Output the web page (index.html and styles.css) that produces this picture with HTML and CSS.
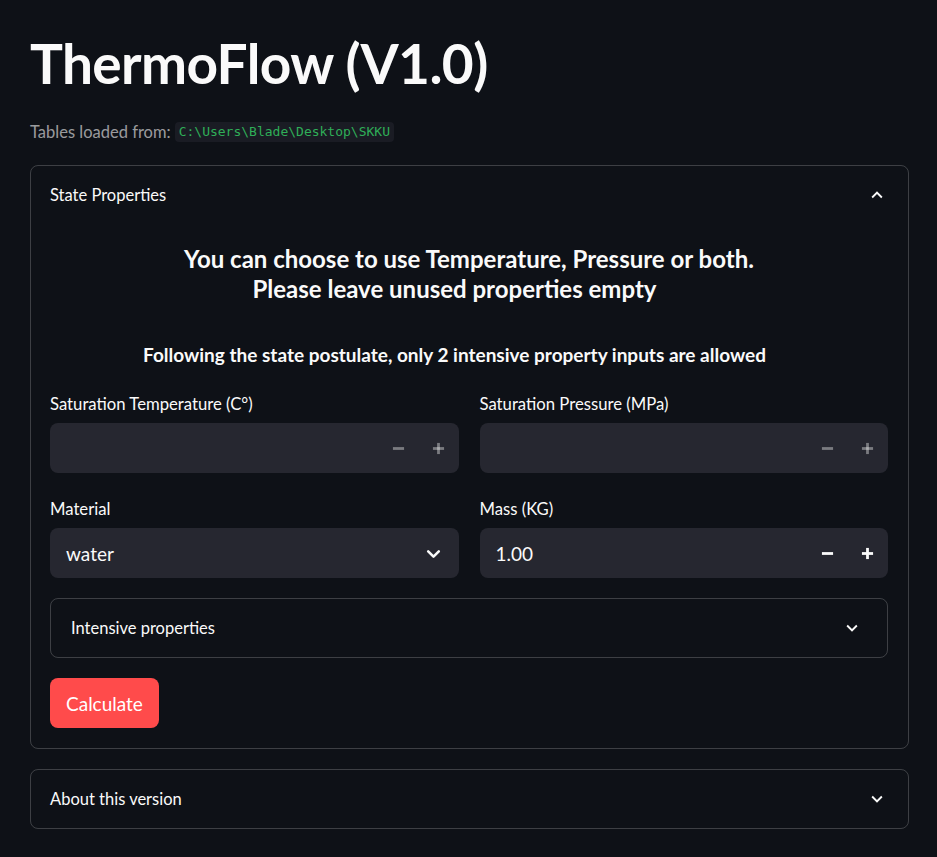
FILE: index.html
```html
<!DOCTYPE html>
<html lang="en">
<head>
<meta charset="utf-8">
<title>ThermoFlow</title>
<link rel="stylesheet" href="styles.css">
</head>
<body>
<main class="main">
  <h1 class="title">ThermoFlow (V1.0)</h1>
  <p class="caption">Tables loaded from: <code class="path">C:\Users\Blade\Desktop\SKKU</code></p>

  <section class="expander">
    <div class="exp-head">
      <span>State Properties</span>
      <svg class="chev" viewBox="0 0 24 24"><path d="M12 8l-6 6 1.41 1.41L12 10.83l4.59 4.58L18 14z" fill="currentColor"/></svg>
    </div>
    <div class="exp-body">
      <h3 class="intro">You can choose to use Temperature, Pressure or both.<br>Please leave unused properties empty<span class="trail"></span></h3>
      <h5 class="note">Following the state postulate, only 2 intensive property inputs are allowed<span class="trail"></span></h5>

      <div class="grid">
        <div class="field">
          <label class="label">Saturation Temperature (C°)</label>
          <div class="input">
            <span class="value"></span>
            <span class="steps dim">
              <svg viewBox="0 0 14 14"><rect x="1" y="5.5" width="12" height="3" fill="currentColor"/></svg>
              <svg viewBox="0 0 14 14"><rect x="1" y="5.5" width="12" height="3" fill="currentColor"/><rect x="5.5" y="1" width="3" height="12" fill="currentColor"/></svg>
            </span>
          </div>
        </div>
        <div class="field">
          <label class="label">Saturation Pressure (MPa)</label>
          <div class="input">
            <span class="value"></span>
            <span class="steps dim">
              <svg viewBox="0 0 14 14"><rect x="1" y="5.5" width="12" height="3" fill="currentColor"/></svg>
              <svg viewBox="0 0 14 14"><rect x="1" y="5.5" width="12" height="3" fill="currentColor"/><rect x="5.5" y="1" width="3" height="12" fill="currentColor"/></svg>
            </span>
          </div>
        </div>
        <div class="field">
          <label class="label">Material</label>
          <div class="input select">
            <span class="value">water</span>
            <svg class="sel-chev" viewBox="0 0 16 16"><path d="M3 6l5 5 5-5" fill="none" stroke="currentColor" stroke-width="2.4" stroke-linecap="round" stroke-linejoin="round"/></svg>
          </div>
        </div>
        <div class="field">
          <label class="label">Mass (KG)</label>
          <div class="input">
            <span class="value">1.00</span>
            <span class="steps">
              <svg viewBox="0 0 14 14"><rect x="1" y="5.5" width="12" height="3" fill="currentColor"/></svg>
              <svg viewBox="0 0 14 14"><rect x="1" y="5.5" width="12" height="3" fill="currentColor"/><rect x="5.5" y="1" width="3" height="12" fill="currentColor"/></svg>
            </span>
          </div>
        </div>
      </div>

      <div class="expander inner">
        <div class="exp-head">
          <span>Intensive properties</span>
          <svg class="chev" viewBox="0 0 24 24"><path d="M16.59 8.59L12 13.17 7.41 8.59 6 10l6 6 6-6z" fill="currentColor"/></svg>
        </div>
      </div>

      <button class="btn" type="button">Calculate</button>
    </div>
  </section>

  <section class="expander about">
    <div class="exp-head">
      <span>About this version</span>
      <svg class="chev" viewBox="0 0 24 24"><path d="M16.59 8.59L12 13.17 7.41 8.59 6 10l6 6 6-6z" fill="currentColor"/></svg>
    </div>
  </section>
</main>
</body>
</html>
```

FILE: styles.css
```css
* { box-sizing: border-box; }
html, body { margin: 0; padding: 0; }
body {
  background: #0e1117;
  color: #fafafa;
  font-family: "Lato", "Noto Sans", "Liberation Sans", sans-serif;
  width: 937px;
  height: 857px;
  overflow: hidden;
}
.main {
  padding: 30px 28px 0 30px;
}
.title {
  margin: 0;
  font-size: 55px;
  font-weight: 700;
  line-height: 66px;
  letter-spacing: -0.6px;
}
.caption {
  margin: 24px 0 0;
  font-size: 16.5px;
  line-height: 24px;
  color: rgba(250, 250, 250, 0.6);
  display: flex;
  align-items: center;
  gap: 4px;
}
.path {
  font-family: "DejaVu Sans Mono", "Liberation Mono", monospace;
  font-size: 13px;
  color: #2fae58;
  background: #1a1c24;
  border-radius: 4px;
  padding: 2px 4px;
  line-height: 16px;
}
.expander {
  margin-top: 21px;
  border: 1px solid rgba(250, 250, 250, 0.2);
  border-radius: 8px;
}
.exp-head {
  display: flex;
  align-items: center;
  justify-content: space-between;
  padding: 15px 20px 15px 19px;
  font-size: 16.5px;
  line-height: 28px;
}
.chev { width: 22px; height: 22px; color: #fafafa; }
.exp-body {
  padding: 1px 20px 20px 19px;
}
.intro {
  margin: 19px 0 0;
  text-align: center;
  font-size: 24px;
  font-weight: 700;
  line-height: 30px;
}
.note {
  margin: 36px 0 0;
  text-align: center;
  font-size: 19px;
  font-weight: 700;
  line-height: 30px;
}
.trail { display: inline-block; width: 29px; }
.grid {
  margin-top: 22px;
  display: grid;
  grid-template-columns: 1fr 1fr;
  column-gap: 21px;
  row-gap: 24px;
}
.field { display: flex; flex-direction: column; }
.label {
  font-size: 16.7px;
  line-height: 24px;
  margin-bottom: 7px;
}
.input {
  height: 50px;
  background: #262730;
  border-radius: 8px;
  display: flex;
  align-items: center;
  justify-content: space-between;
  padding: 0 14px 0 16px;
  font-size: 19px;
}
.steps { display: flex; gap: 27px; align-items: center; color: #fafafa; }
.steps.dim { color: rgba(250, 250, 250, 0.4); }
.steps svg { width: 13px; height: 13px; }
.select { padding-right: 17px; }
.sel-chev { width: 17px; height: 17px; color: #fafafa; }
.inner { margin-top: 20px; }
.inner .exp-head { padding-left: 20px; padding-right: 24px; }
.btn {
  margin-top: 20px;
  height: 50px;
  padding: 0 16px;
  border: none;
  border-radius: 8px;
  background: #ff4b4b;
  color: #fff;
  font-family: inherit;
  font-size: 19px;
}
.about { margin-top: 20px; }
```
